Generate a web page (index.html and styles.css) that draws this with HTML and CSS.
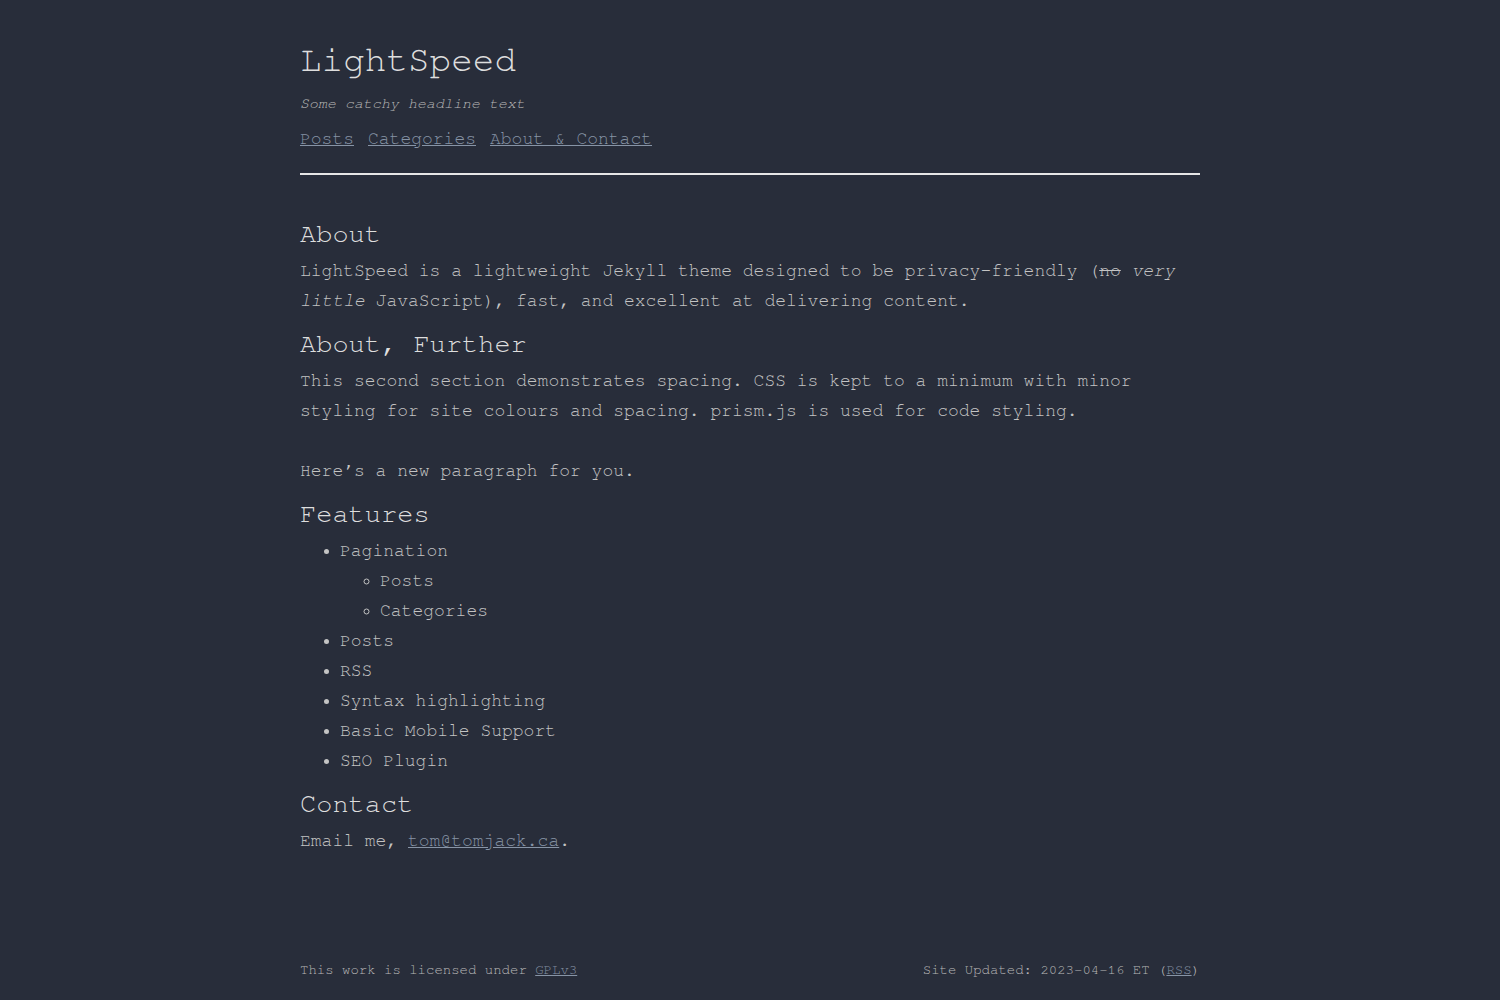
FILE: index.html
```html
<!DOCTYPE html>
<html lang="en">
<head>
<meta charset="utf-8">
<title>LightSpeed</title>
<link rel="stylesheet" href="styles.css">
</head>
<body>
<div class="page">
  <header class="site-header">
    <h1 class="site-title">LightSpeed</h1>
    <p class="tagline">Some catchy headline text</p>
    <nav class="nav">
      <a href="#">Posts</a>
      <a href="#">Categories</a>
      <a href="#">About &amp; Contact</a>
    </nav>
    <hr class="rule">
  </header>
  <main class="content">
    <h2>About</h2>
    <p>LightSpeed is a lightweight Jekyll theme designed to be privacy-friendly (<s>no</s> <em>very little</em> JavaScript), fast, and excellent at delivering content.</p>
    <h2>About, Further</h2>
    <p>This second section demonstrates spacing. CSS is kept to a minimum with minor styling for site colours and spacing. prism.js is used for code styling.</p>
    <p>Here’s a new paragraph for you.</p>
    <h2>Features</h2>
    <ul>
      <li>Pagination
        <ul>
          <li>Posts</li>
          <li>Categories</li>
        </ul>
      </li>
      <li>Posts</li>
      <li>RSS</li>
      <li>Syntax highlighting</li>
      <li>Basic Mobile Support</li>
      <li>SEO Plugin</li>
    </ul>
    <h2>Contact</h2>
    <p>Email me, <a href="#">tom@tomjack.ca</a>.</p>
  </main>
  <footer class="site-footer">
    <span>This work is licensed under <a href="#">GPLv3</a></span>
    <span>Site Updated: 2023-04-16 ET (<a href="#">RSS</a>)</span>
  </footer>
</div>
</body>
</html>
```

FILE: styles.css
```css
html, body {
  margin: 0;
  padding: 0;
  background: #282d3a;
}
body {
  font-family: "Nimbus Mono PS", "Nimbus Mono L", FreeMono, Courier, "Liberation Mono", monospace;
  color: #c4c4c4;
  font-size: 18px;
  line-height: 30px;
}
.page {
  width: 900px;
  margin: 0 auto;
  min-height: 100vh;
  display: flex;
  flex-direction: column;
}
a {
  color: #8794a6;
  text-decoration: underline;
}
.site-header {
  padding-top: 38px;
}
.site-title {
  margin: 0;
  font-size: 36px;
  line-height: 44px;
  font-weight: normal;
  color: #dedede;
}
.tagline {
  margin: 11px 0 0;
  font-size: 15px;
  line-height: 22px;
  font-style: italic;
  color: #b8b8b8;
}
.nav {
  display: flex;
  gap: 14px;
  margin-top: 13px;
  line-height: 22px;
}
.rule {
  margin: 23px 0 0;
  border: 0;
  height: 2px;
  background: #e6e6e6;
}
.content {
  padding-top: 41px;
}
.content h2 {
  margin: 10px 0 4px;
  font-size: 27px;
  line-height: 36px;
  font-weight: normal;
  color: #dedede;
}
.content h2:first-child {
  margin-top: 0;
}
.content p {
  margin: 0;
}
.content p + p {
  margin-top: 30px;
}
.content ul {
  margin: 0;
  padding-left: 40px;
}
.site-footer {
  margin-top: auto;
  display: flex;
  justify-content: space-between;
  font-size: 14px;
  line-height: 20px;
  padding-bottom: 20px;
  color: #b8b8b8;
}
```
